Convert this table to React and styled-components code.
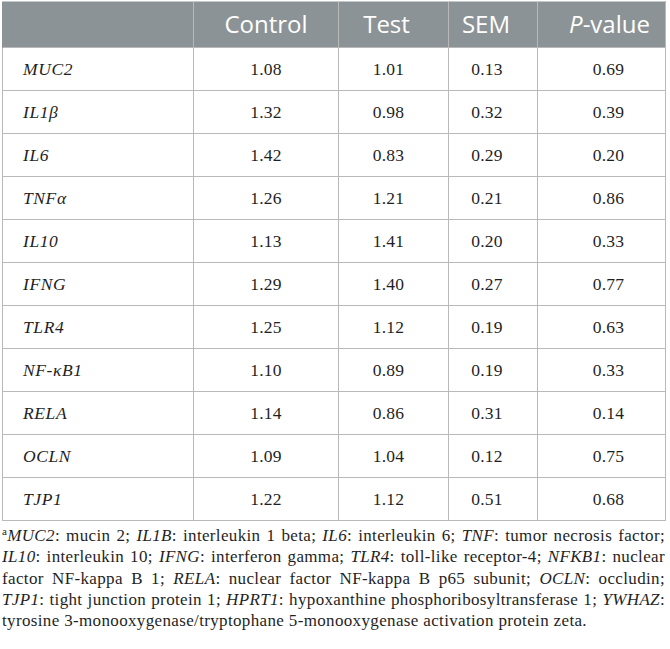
import React from 'react';
import styled, {createGlobalStyle} from 'styled-components';

const GlobalStyle = createGlobalStyle`
  html, body {
    margin: 0;
    padding: 0;
    background: #ffffff;
  }
`;

const serif = `"Liberation Serif", "Times New Roman", serif`;

const Page = styled.div`
  width: 663px;
  padding: 1px 0 0 2px;
`;

const Table = styled.table`
  width: 663px;
  border-collapse: collapse;
  table-layout: fixed;
  color: #1f1f1f;
`;

const HeadCell = styled.th`
  background: #8c9396;
  color: #ffffff;
  font-family: "Open Sans", "Noto Sans", sans-serif;
  font-weight: 400;
  font-size: 24px;
  height: 43px;
  padding: 0 ${p => p.$padR || 0}px 2px ${p => p.$padL || 0}px;
  text-align: center;
  border-left: 1px solid #b9b9b9;
  border-top: 1px solid #c4c8ca;
  &:first-child {
    border-left: 1px solid #8c9396;
  }
  &:last-child {
    border-right: 1px solid #b9b9b9;
  }
`;

const Row = styled.tr`
  height: 43px;
`;

const Cell = styled.td`
  border: 1px solid #b9b9b9;
  font-family: ${serif};
  font-size: 17.5px;
  letter-spacing: 0.2px;
  text-align: center;
  padding: 0 ${p => p.$padR || 0}px 0 ${p => p.$padL || 0}px;
`;

const NameCell = styled(Cell)`
  text-align: left;
  padding-left: 20px;
  font-style: italic;
  letter-spacing: 0.6px;
`;

const Note = styled.p`
  margin: 4px 0 0;
  font-family: ${serif};
  font-size: 17px;
  letter-spacing: 0.35px;
  line-height: 21.3px;
  text-align: justify;
  color: #1f1f1f;
  sup {
    font-size: 11px;
    vertical-align: 6px;
    line-height: 0;
  }
`;

const rows = [
  ['MUC2', '1.08', '1.01', '0.13', '0.69'],
  ['IL1β', '1.32', '0.98', '0.32', '0.39'],
  ['IL6', '1.42', '0.83', '0.29', '0.20'],
  ['TNFα', '1.26', '1.21', '0.21', '0.86'],
  ['IL10', '1.13', '1.41', '0.20', '0.33'],
  ['IFNG', '1.29', '1.40', '0.27', '0.77'],
  ['TLR4', '1.25', '1.12', '0.19', '0.63'],
  ['NF-κB1', '1.10', '0.89', '0.19', '0.33'],
  ['RELA', '1.14', '0.86', '0.31', '0.14'],
  ['OCLN', '1.09', '1.04', '0.12', '0.75'],
  ['TJP1', '1.22', '1.12', '0.51', '0.68'],
];

// small shifts so the numbers sit where the original has them
const pads = [{}, {$padR: 10}, {$padR: 12}, {$padL: 14}];

export default function App() {
  return (
    <Page>
      <GlobalStyle />
      <Table>
        <colgroup>
          <col style={{width: 191}} />
          <col style={{width: 145}} />
          <col style={{width: 110}} />
          <col style={{width: 89}} />
          <col style={{width: 128}} />
        </colgroup>
        <thead>
          <tr>
            <HeadCell></HeadCell>
            <HeadCell>Control</HeadCell>
            <HeadCell $padR={14}>Test</HeadCell>
            <HeadCell $padR={14}>SEM</HeadCell>
            <HeadCell $padL={16}><i>P</i>-value</HeadCell>
          </tr>
        </thead>
        <tbody>
          {rows.map(r => (
            <Row key={r[0]}>
              <NameCell>{r[0]}</NameCell>
              {r.slice(1).map((v, i) => (
                <Cell key={i} {...pads[i]}>{v}</Cell>
              ))}
            </Row>
          ))}
        </tbody>
      </Table>
      <Note>
        <sup>a</sup><i>MUC2</i>: mucin 2; <i>IL1B</i>: interleukin 1 beta; <i>IL6</i>: interleukin 6; <i>TNF</i>: tumor necrosis factor; <i>IL10</i>: interleukin 10; <i>IFNG</i>: interferon gamma; <i>TLR4</i>: toll-like receptor-4; <i>NFKB1</i>: nuclear factor NF-kappa B 1; <i>RELA</i>: nuclear factor NF-kappa B p65 subunit; <i>OCLN</i>: occludin; <i>TJP1</i>: tight junction protein 1; <i>HPRT1</i>: hypoxanthine phosphoribosyltransferase 1; <i>YWHAZ</i>: tyrosine 3-monooxygenase/tryptophane 5-monooxygenase activation protein zeta.
      </Note>
    </Page>
  );
}
